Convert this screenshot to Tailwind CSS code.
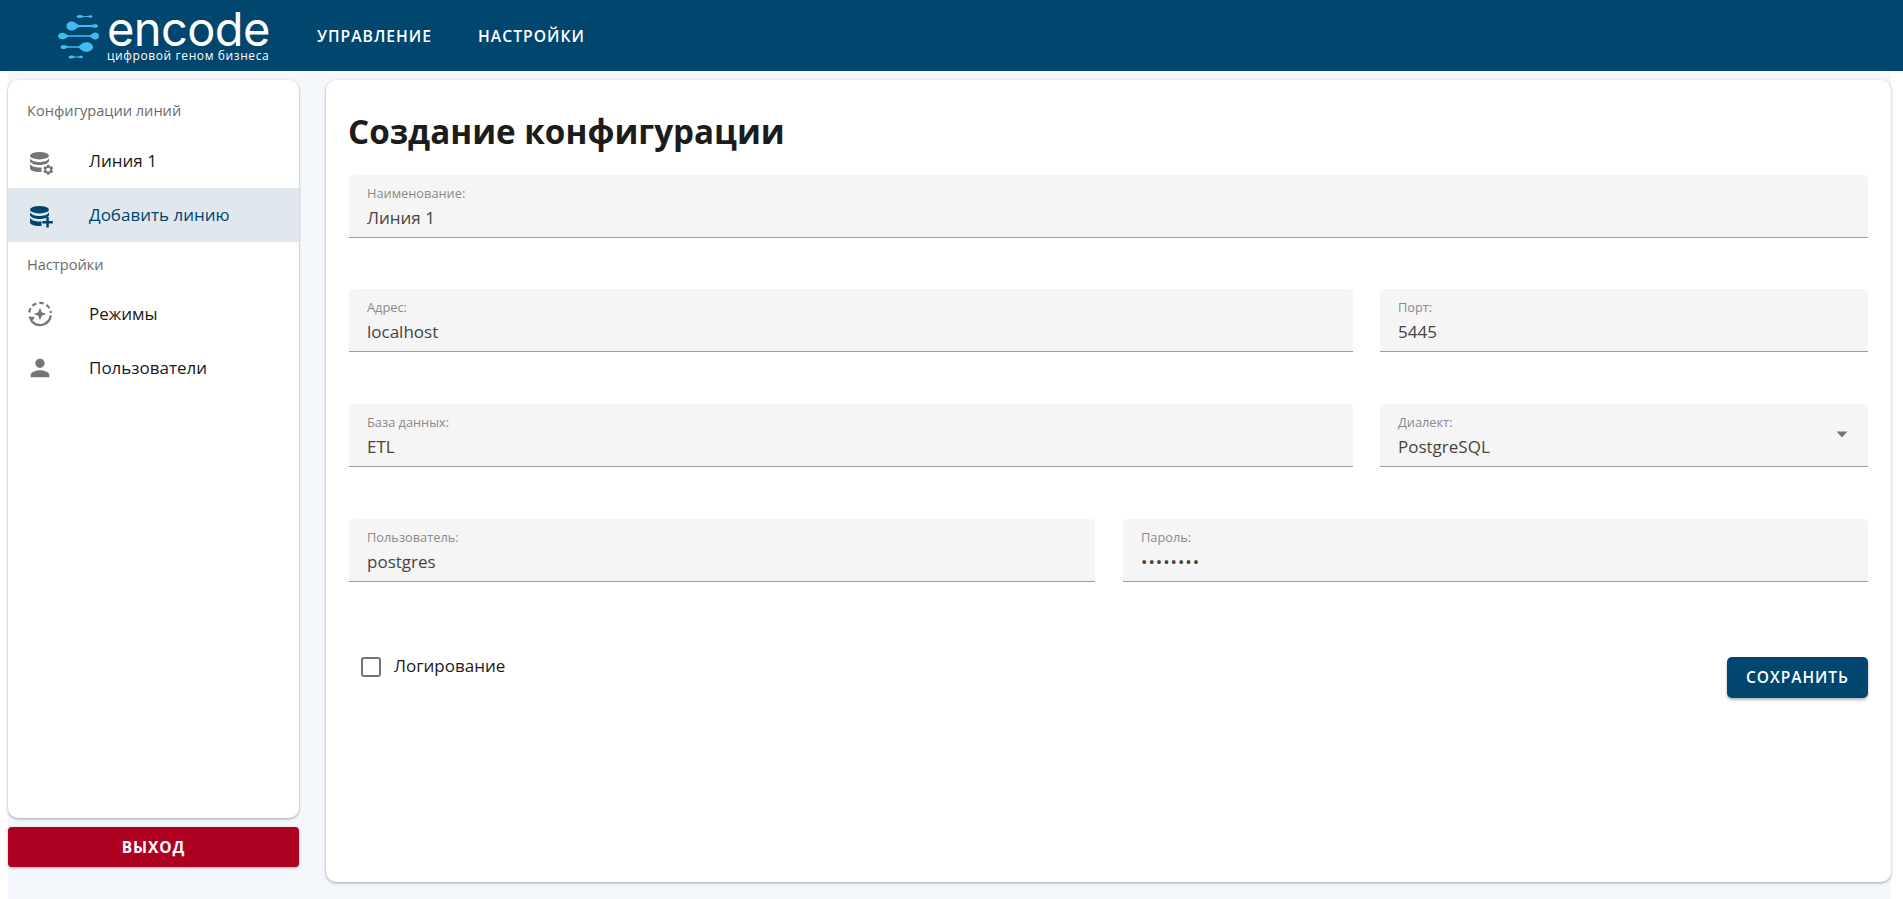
<!doctype html>
<html lang="ru"><head><meta charset="utf-8"><title>Encode</title>
<script src="https://cdn.jsdelivr.net/npm/@tailwindcss/browser@4"></script></head>
<body class="bg-white font-['Open_Sans',sans-serif] overflow-hidden">
<div class="w-[1903px] h-[899px] flex flex-col">
<header class="h-[71px] bg-[#00466e] flex items-center shrink-0">
  <div class="w-[317px] flex items-center pl-[57px] shrink-0">
    <svg class="w-[44px] h-[50px] shrink-0" viewBox="0 0 44 50" fill="#3fbdf0">
      <path d="M19.500 5.500c0-1.200 3-2.200 5-1.200l2 .7h4l2-.6c1.500-.5 3 .3 3 1.100s-1.500 1.600-3 1.100l-2-.6h-4l-2 .7c-2 1-5 0-5-1.200z"/>
      <path d="M9.500 15c0-3 3-5 6-4.500 2.500.4 4 2.500 6.500 3.600h12l2.500-.7c2-.6 4.500 0 4.500 1.600s-2.500 2.200-4.500 1.600l-2.500-.7H22c-2.500 1.100-4 3.200-6.500 3.600-3 .5-6-1.500-6-4.500z"/>
      <path d="M1 25c0-2.200 2.500-3.500 5-3.300 2.500.2 3.500 2 5.500 2.600h21c2-.8 3.500-2.600 5.500-2.800 2-.2 4 1.300 4 3.500s-2 3.700-4 3.500c-2-.2-3.500-2-5.500-2.800h-21c-2 .6-3 2.400-5.500 2.600-2.500.2-5-1.100-5-3.300z"/>
      <path d="M3.500 36c0-1.500 2-2.400 4-2l3 1.300h11c2-1 3-3.600 7-4 4-.4 7.500 1.800 7.500 4.700s-3.500 5.100-7.500 4.700c-4-.4-5-3-7-4h-11l-3 1.300c-2 .4-4-.5-4-2z"/>
      <path d="M11.500 46c0-1.200 2.500-2.200 4.500-1.200l2 .6h3l2-.5c1.500-.4 3 .2 3 1.100s-1.500 1.500-3 1.100l-2-.5h-3l-2 .6c-2 1-4.500 0-4.500-1.200z"/>
    </svg>
    <div class="ml-[6px] flex flex-col text-white">
      <span class="font-['Inter',sans-serif] font-normal text-[47px] leading-[40px] tracking-[-0.6px] h-[40px] whitespace-nowrap">encode</span>
      <span class="text-[12px] leading-[14px] font-medium tracking-[0.6px] whitespace-nowrap">цифровой геном бизнеса</span>
    </div>
  </div>
  <nav class="flex gap-[46px] text-white text-[15.7px] font-semibold tracking-[1px] mt-[2px]">
    <span>УПРАВЛЕНИЕ</span><span>НАСТРОЙКИ</span>
  </nav>
</header>
<div class="ml-2 w-[1883px] flex-1 bg-[#f4f7fb] flex pt-[9px]">
  <aside class="w-[291px] shrink-0 flex flex-col gap-[9px]">
    <div class="h-[738px] bg-white rounded-[10px] shadow-[0_1px_3px_rgba(0,0,0,0.35)] pt-[14px]">
      <div class="h-[34px] px-[19px] flex items-center text-[14.6px] text-[#6b6b6b]">Конфигурации линий</div>
      <div class="h-[54px] mt-[6px] flex items-center pl-[18px] text-[17px] text-[#1a1a1a]">
        <svg class="w-[28px] h-[28px] shrink-0" viewBox="0 0 28 28" fill="#757575">
          <ellipse cx="13.500" cy="8.700" rx="9.500" ry="3.700"/>
          <path d="M4 11.500c1.500 2.500 5.500 3.500 9.500 3.500s8-1 9.500-3.500v3c-1.500 2.500-5.500 3.500-9.500 3.500s-8-1-9.500-3.500z"/>
          <path d="M4 17c1.500 2.500 5.500 3.500 9.500 3.500h2V25h-2c-5 0-9.500-1.500-9.500-3.500z"/>
          <path transform="translate(16 16.500) scale(0.52)" d="M19.140 12.940c.04-.3.06-.61.06-.94 0-.32-.02-.64-.07-.94l2.030-1.580c.18-.14.23-.41.12-.61l-1.920-3.320c-.12-.22-.37-.29-.59-.22l-2.390.96c-.5-.38-1.030-.7-1.620-.94l-.36-2.540c-.04-.24-.24-.41-.48-.41h-3.840c-.24 0-.43.17-.47.41l-.36 2.540c-.59.24-1.130.57-1.620.94l-2.390-.96c-.22-.08-.47 0-.59.22L2.740 8.870c-.12.21-.08.47.12.61l2.030 1.580c-.05.3-.09.63-.09.94s.02.64.07.94l-2.030 1.580c-.18.14-.23.41-.12.61l1.920 3.320c.12.22.37.29.59.22l2.390-.96c.5.38 1.030.7 1.620.94l.36 2.540c.05.24.24.41.48.41h3.840c.24 0 .44-.17.47-.41l.36-2.540c.59-.24 1.130-.56 1.620-.94l2.390.96c.22.08.47 0 .59-.22l1.920-3.320c.12-.22.07-.47-.12-.61l-2.010-1.580zM12 15.600c-1.980 0-3.600-1.620-3.600-3.600s1.620-3.600 3.600-3.600 3.600 1.620 3.600 3.600-1.620 3.600-3.600 3.600z"/>
        </svg>
        <span class="ml-[35px]">Линия 1</span>
      </div>
      <div class="h-[54px] flex items-center pl-[18px] text-[17px] text-[#00466e] bg-[#e0e7ed]">
        <svg class="w-[28px] h-[28px] shrink-0" viewBox="0 0 28 28" fill="#00466e">
          <ellipse cx="13.500" cy="8.700" rx="9.500" ry="3.700"/>
          <path d="M4 11.500c1.500 2.500 5.500 3.500 9.500 3.500s8-1 9.500-3.500v3c-1.500 2.500-5.500 3.500-9.500 3.500s-8-1-9.500-3.500z"/>
          <path d="M4 17c1.500 2.500 5.500 3.500 9.500 3.500h2V25h-2c-5 0-9.500-1.500-9.500-3.500z"/>
          <path d="M20.300 16h2.500v4h4v2.500h-4v4h-2.500v-4h-4V20h4z"/>
        </svg>
        <span class="ml-[35px]">Добавить линию</span>
      </div>
      <div class="h-[45px] px-[19px] flex items-center text-[14.6px] text-[#6b6b6b]">Настройки</div>
      <div class="h-[54px] flex items-center pl-[18px] text-[17px] text-[#1a1a1a]">
        <svg class="w-[28px] h-[28px] shrink-0" viewBox="0 0 28 28" fill="none" stroke="#757575" stroke-width="2.200">
          <path d="M3.200 12.500A10.900 10.900 0 0 1 24.900 13" stroke-dasharray="4.500 3"/>
          <path d="M24.800 15.500A10.900 10.900 0 0 1 6 21.500"/>
          <path d="M2.500 16.500l6.300.6-3.600 5.600z" fill="#757575" stroke="none"/>
          <path d="M14 7.800l1.800 4.400 4.400 1.800-4.400 1.800-1.800 4.400-1.800-4.400L7.800 14l4.400-1.800z" fill="#757575" stroke="none"/>
        </svg>
        <span class="ml-[35px]">Режимы</span>
      </div>
      <div class="h-[54px] flex items-center pl-[18px] text-[17px] text-[#1a1a1a]">
        <svg class="w-[28px] h-[28px] shrink-0" viewBox="0 0 24 24" fill="#757575"><path d="M12 12c2.210 0 4-1.790 4-4s-1.790-4-4-4-4 1.790-4 4 1.790 4 4 4zm0 2c-2.670 0-8 1.340-8 4v2h16v-2c0-2.660-5.330-4-8-4z"/></svg>
        <span class="ml-[35px]">Пользователи</span>
      </div>
    </div>
    <button class="h-[40px] pt-[1px] bg-[#ae0020] rounded-[4px] text-white text-[15.5px] font-bold tracking-[0.9px] shadow-[0_1px_3px_rgba(0,0,0,0.3)]">ВЫХОД</button>
  </aside>
  <main class="ml-[27px] w-[1565px] h-[802px] bg-white rounded-[10px] shadow-[0_1px_3px_rgba(0,0,0,0.35)] px-[23px]">
    <h1 class="h-[95px] pt-[29px] -ml-[1px] text-[33.2px] leading-[46px] font-bold text-[#1c1c1c]">Создание конфигурации</h1>
    <div class="flex flex-col">
      <div class="h-[63px] bg-[#f5f5f5] rounded-t-[5px] border-b border-[#9e9e9e] px-[18px] pt-[9px]">
        <div class="text-[12.800px] leading-[18px] text-[#8a8a8a]">Наименование:</div>
        <div class="text-[17px] leading-[24px] mt-[4px] text-[#444]">Линия 1</div>
      </div>
      <div class="flex gap-[27px] mt-[51px]">
        <div class="w-[1004px] h-[63px] bg-[#f5f5f5] rounded-t-[5px] border-b border-[#9e9e9e] px-[18px] pt-[9px]">
          <div class="text-[12.800px] leading-[18px] text-[#8a8a8a]">Адрес:</div>
          <div class="text-[17px] leading-[24px] mt-[4px] text-[#444]">localhost</div>
        </div>
        <div class="flex-1 h-[63px] bg-[#f5f5f5] rounded-t-[5px] border-b border-[#9e9e9e] px-[18px] pt-[9px]">
          <div class="text-[12.800px] leading-[18px] text-[#8a8a8a]">Порт:</div>
          <div class="text-[17px] leading-[24px] mt-[4px] text-[#444]">5445</div>
        </div>
      </div>
      <div class="flex gap-[27px] mt-[52px]">
        <div class="w-[1004px] h-[63px] bg-[#f5f5f5] rounded-t-[5px] border-b border-[#9e9e9e] px-[18px] pt-[9px]">
          <div class="text-[12.800px] leading-[18px] text-[#8a8a8a]">База данных:</div>
          <div class="text-[17px] leading-[24px] mt-[4px] text-[#444]">ETL</div>
        </div>
        <div class="flex-1 h-[63px] bg-[#f5f5f5] rounded-t-[5px] border-b border-[#9e9e9e] pl-[18px] pr-[20px] pt-[9px] flex items-center justify-between">
          <div class="self-start">
            <div class="text-[12.800px] leading-[18px] text-[#8a8a8a]">Диалект:</div>
            <div class="text-[17px] leading-[24px] mt-[4px] text-[#444]">PostgreSQL</div>
          </div>
          <svg class="w-[12px] h-[7px] mb-[10px]" viewBox="0 0 12 7" fill="#757575"><path d="M0.500 0.500h11L6 6.500z"/></svg>
        </div>
      </div>
      <div class="flex gap-[28px] mt-[52px]">
        <div class="w-[746px] h-[63px] bg-[#f5f5f5] rounded-t-[5px] border-b border-[#9e9e9e] px-[18px] pt-[9px]">
          <div class="text-[12.800px] leading-[18px] text-[#8a8a8a]">Пользователь:</div>
          <div class="text-[17px] leading-[24px] mt-[4px] text-[#444]">postgres</div>
        </div>
        <div class="flex-1 h-[63px] bg-[#f5f5f5] rounded-t-[5px] border-b border-[#9e9e9e] px-[18px] pt-[9px]">
          <div class="text-[12.800px] leading-[18px] text-[#8a8a8a]">Пароль:</div>
          <div class="text-[17px] leading-[24px] mt-[4px] text-[#444] tracking-[1px]">••••••••</div>
        </div>
      </div>
    </div>
    <div class="flex justify-between mt-[75px] pl-[12px]">
      <label class="flex items-center gap-[13px] h-[20px]">
        <span class="w-[20px] h-[20px] border-2 border-[#757575] rounded-[3px]"></span>
        <span class="text-[17px] text-[#1a1a1a] -mt-[2px]">Логирование</span>
      </label>
      <button class="w-[141px] h-[41px] bg-[#00466e] rounded-[5px] text-white text-[15.5px] font-semibold tracking-[1px] shadow-[0_2px_3px_rgba(0,0,0,0.3)]">СОХРАНИТЬ</button>
    </div>
  </main>
</div>
</div>
</body></html>
